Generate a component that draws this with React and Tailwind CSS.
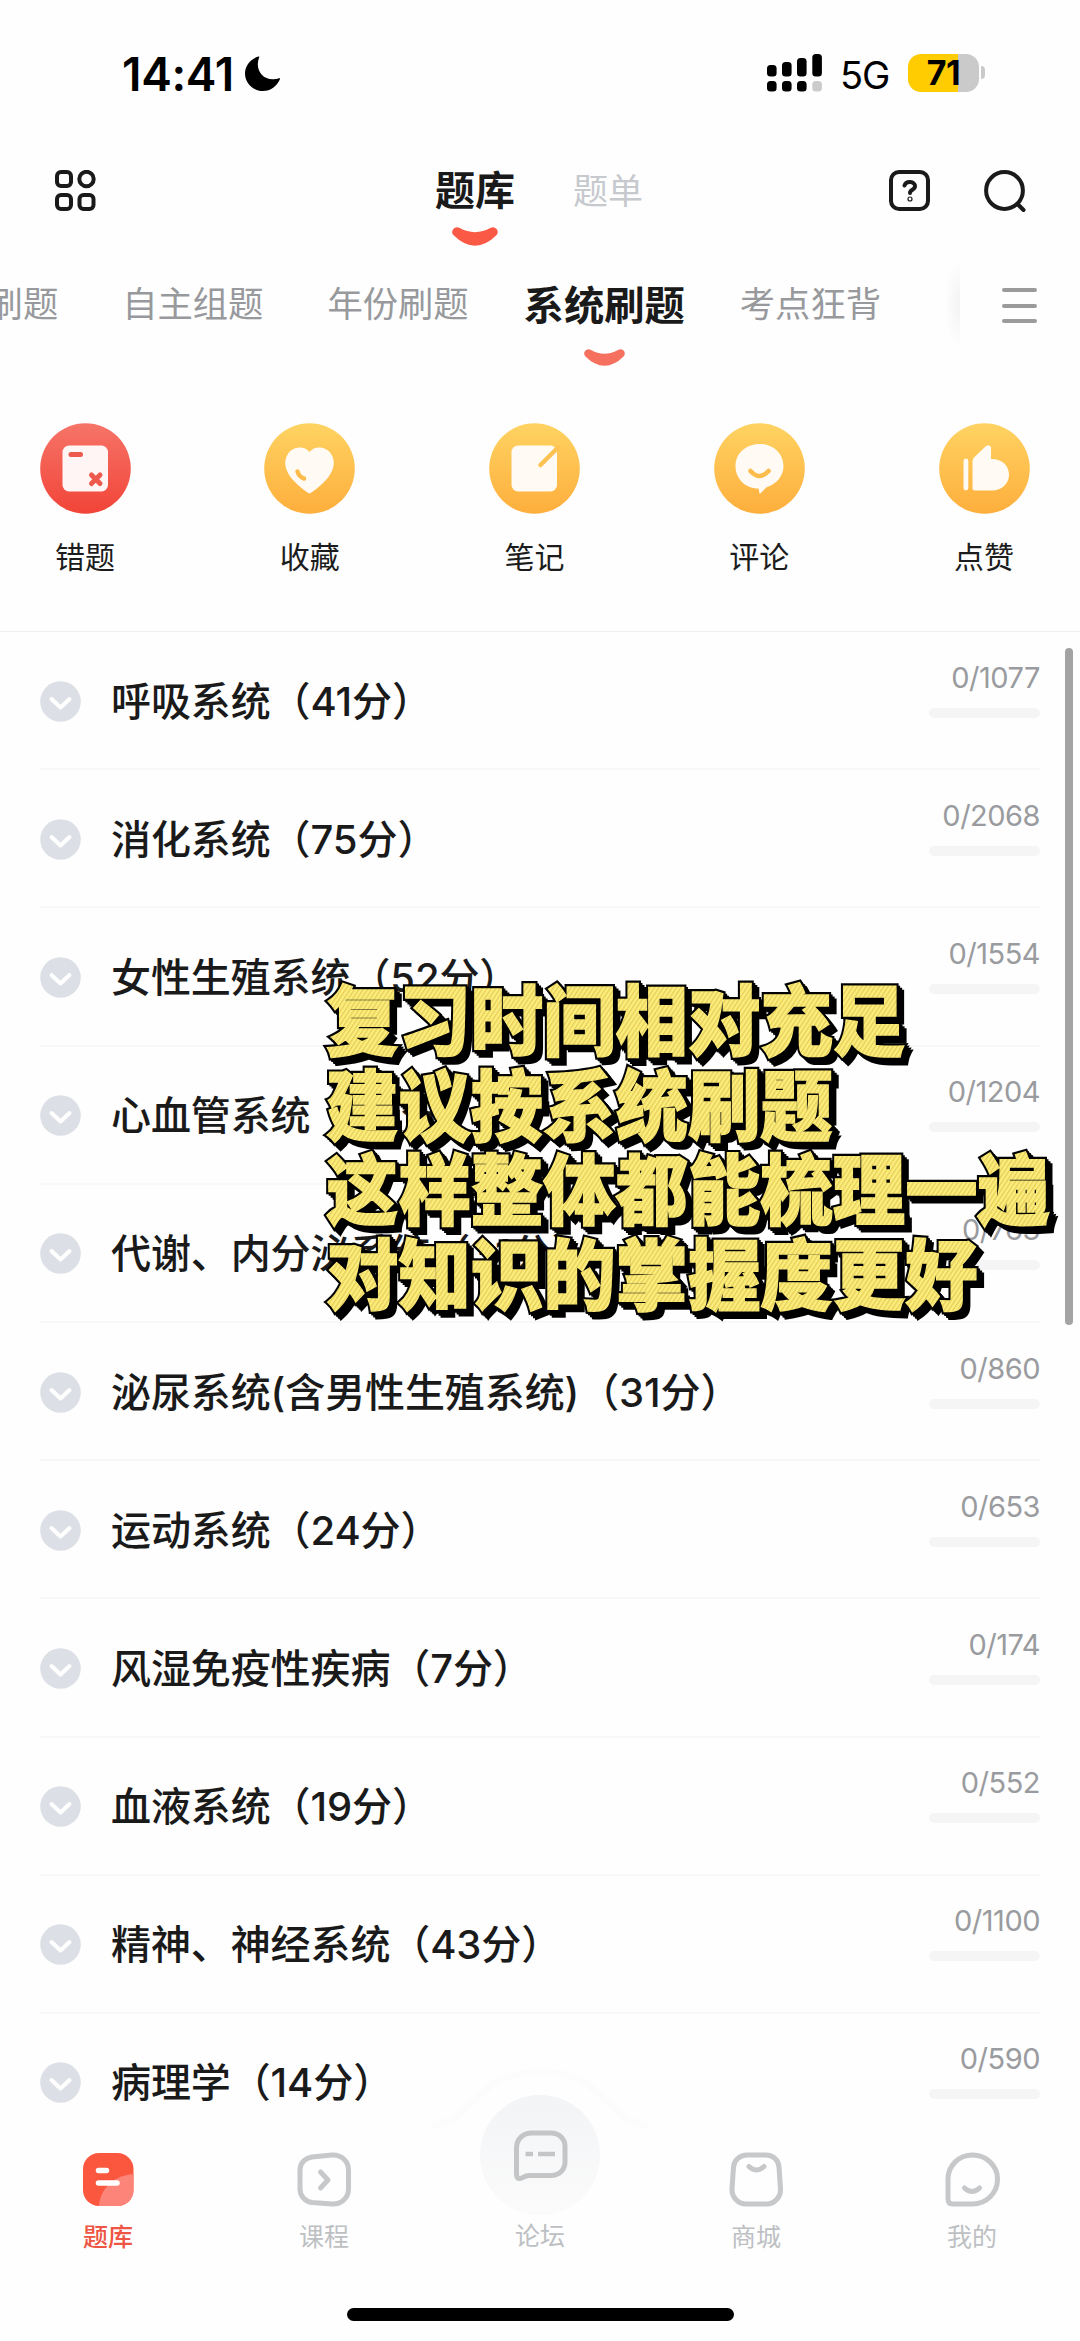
import React from 'react';

const tabs = [
  { label: '智能刷题', className: '-ml-[83px]' },
  { label: '自主组题', className: 'ml-[64px]' },
  { label: '年份刷题', className: 'ml-[64px]' },
  { label: '系统刷题', className: 'ml-[55px]', active: true },
  { label: '考点狂背', className: 'ml-[55px]' },
];

const chapters = [
  { name: '呼吸系统（41分）', total: 1077 },
  { name: '消化系统（75分）', total: 2068 },
  { name: '女性生殖系统（52分）', total: 1554 },
  { name: '心血管系统（63分）', total: 1204 },
  { name: '代谢、内分泌系统（31分）', total: 763 },
  { name: '泌尿系统(含男性生殖系统)（31分）', total: 860 },
  { name: '运动系统（24分）', total: 653 },
  { name: '风湿免疫性疾病（7分）', total: 174 },
  { name: '血液系统（19分）', total: 552 },
  { name: '精神、神经系统（43分）', total: 1100 },
  { name: '病理学（14分）', total: 590 },
];

const tips = ['复习时间相对充足', '建议按系统刷题', '这样整体都能梳理一遍', '对知识的掌握度更好'];

function Smile({ className }) {
  return (
    <svg className={className} viewBox="0 0 46 19" fill="none">
      <path d="M5 5Q23 23 41 5Q23 15 5 5Z" fill="currentColor" stroke="currentColor" strokeWidth="9.500" strokeLinejoin="round" />
    </svg>
  );
}

function StatusBar() {
  const bars = [
    { x: 0, y: 11 },
    { x: 15, y: 8 },
    { x: 30, y: 4 },
    { x: 45.3, y: 0 },
  ];
  return (
    <div className="flex h-[144px] shrink-0 items-center pl-[122px] pr-[95px]">
      <span className="mt-[3px] text-[46px] leading-none font-semibold tracking-[-0.300px] text-black">14:41</span>
      <svg className="ml-[11px] mt-[2px] h-[35px] w-[35px]" viewBox="0 0 35 35">
        <path d="M13.500 0.600C14.500 0.200 14.400 0.900 14 1.800C10 13 16.500 24 29 23.300C31 23.200 32.500 22.800 34 22.300C35 22 35.200 22.500 34.900 23.300C32 30.500 25.500 35 18 35C8 35 0 27 0 17.500C0 9.800 5.500 3 13.500 0.600Z" fill="#000" />
      </svg>
      <svg className="ml-auto mt-[1px] h-[38px] w-[56px]" viewBox="0 0 56 38">
        {bars.map((b, i) => (
          <g key={i}>
            <rect x={b.x} y={b.y} width="9.600" height={22.5 - b.y} rx="3.500" fill="#000" />
            <rect x={b.x} y="27" width="9.600" height="10.600" rx="3.500" fill={i === 3 ? '#cbcbcb' : '#000'} />
          </g>
        ))}
      </svg>
      <span className="ml-[17px] mt-[5px] w-[50px] text-[38px] leading-none tracking-[-1px]">5G</span>
      <div className="ml-[18px] mt-[1px] flex items-center">
        <div className="flex h-[38px] w-[71px] items-center justify-center rounded-[13px] bg-linear-to-r from-[#fecc00] from-71% to-[#cacaca] to-71% text-[34px] leading-none font-bold tracking-[-0.500px] text-black">71</div>
        <div className="ml-[2px] h-[13px] w-[4px] rounded-r-full bg-[#cacaca]" />
      </div>
    </div>
  );
}

function Header() {
  return (
    <div className="flex h-[114px] shrink-0 items-start pl-[55px] pr-[54px]">
      <svg className="mt-[26px] h-[41px] w-[41px]" viewBox="0 0 41 41" fill="none" stroke="#1a1a1a" strokeWidth="4">
        <rect x="2" y="2" width="14" height="14" rx="4" />
        <circle cx="31.500" cy="9" r="7.200" />
        <rect x="2" y="25" width="14" height="14" rx="4" />
        <rect x="24.500" y="25" width="14" height="14" rx="4" />
      </svg>
      <div className="ml-[339px] mt-[27px] flex flex-col items-center">
        <span className="text-[40px] leading-[40px] font-bold text-[#1a1a1a]">题库</span>
        <Smile className="mt-[16px] h-[19px] w-[46px] text-[#fa5a45]" />
      </div>
      <span className="ml-[58px] mt-[30px] text-[35px] leading-[35px] text-[#c6c9cd]">题单</span>
      <div className="ml-auto mt-[26px] flex h-[41px] w-[41px] items-center justify-center rounded-[10px] border-4 border-[#1a1a1a]">
        <svg className="h-[22px] w-[16px]" viewBox="0 0 16 22" fill="none" stroke="#1a1a1a" strokeWidth="4" strokeLinecap="round">
          <path d="M2.500 5.500C4 0.500 13 1 13 6.300C13 10 8 9.500 8 13" />
          <circle cx="8" cy="19" r="0.600" />
        </svg>
      </div>
      <svg className="ml-[54px] mt-[26px] h-[42px] w-[42px]" viewBox="0 0 42 42" fill="none" stroke="#1a1a1a" strokeWidth="4" strokeLinecap="round">
        <circle cx="20.500" cy="20.500" r="18.400" />
        <path d="M33.500 34L39.500 40" />
      </svg>
    </div>
  );
}

function TabBar() {
  return (
    <div className="flex h-[126px] shrink-0 items-start overflow-hidden">
      <div className="flex h-full w-[944px] items-start whitespace-nowrap">
        {tabs.map((t) =>
          t.active ? (
            <div key={t.label} className={`${t.className} mt-[28px] flex shrink-0 flex-col items-center`}>
              <span className="text-[40.300px] leading-[40px] font-bold text-[#1a1a1a]">{t.label}</span>
              <Smile className="mt-[23px] h-[17px] w-[41px] text-[#f6705f]" />
            </div>
          ) : (
            <span key={t.label} className={`${t.className} mt-[29px] shrink-0 text-[35.300px] leading-[36px] text-[#97999c]`}>{t.label}</span>
          )
        )}
      </div>
      <div className="h-[92px] w-[16px] bg-radial-[at_100%_50%] from-[#f3f3f3] to-[#fefefe] to-70%" />
      <div className="ml-[42px] mt-[30px] flex w-[35px] flex-col gap-[11.500px]">
        <span className="h-[4px] rounded-full bg-[#9b9b9b]" />
        <span className="h-[4px] rounded-full bg-[#9b9b9b]" />
        <span className="h-[4px] rounded-full bg-[#9b9b9b]" />
      </div>
    </div>
  );
}

const shortcuts = [
  {
    label: '错题',
    icon: (
      <>
        <rect x="22.500" y="22.500" width="45.500" height="46" rx="6.500" fill="#fff5f4" />
        <path d="M31 31.500H40.500" stroke="#ee594d" strokeWidth="5" />
        <path d="M51.500 52L60 60.500M60 52L51.500 60.500" stroke="#ee594d" strokeWidth="5" />
      </>
    ),
  },
  {
    label: '收藏',
    icon: (
      <>
        <path d="M45.500 29C51 22 62 24 66.500 30C73 39 69 49 62 57C57 62.500 49 69 45.500 70.500C42 69 34 62.500 29 57C22 49 18 39 24.500 30C29 24 40 22 45.500 29Z" fill="#fffaf3" />
        <path d="M33.500 48.500Q35 54 40 55.500" stroke="#fdbc4b" strokeWidth="4.500" />
      </>
    ),
  },
  {
    label: '笔记',
    icon: (
      <>
        <rect x="22.500" y="22.500" width="45.500" height="46" rx="6.500" fill="#fffaf3" />
        <path d="M51.500 42L69 24.500" stroke="#fdc253" strokeWidth="4.500" />
      </>
    ),
  },
  {
    label: '评论',
    icon: (
      <>
        <path d="M45.500 21C59 21 69.500 30.500 69.500 43C69.500 53 62.500 61 53 64C50 66 48.500 69 46.200 70.500C44.800 71 45.500 68 44.500 65.500C31 65.500 21.500 55.500 21.500 43C21.500 30.500 32 21 45.500 21Z" fill="#fffaf3" />
        <path d="M36.500 48Q45.500 58 54.500 48" stroke="#fdbd4c" strokeWidth="4.500" />
      </>
    ),
  },
  {
    label: '点赞',
    icon: (
      <>
        <rect x="24.500" y="35.500" width="4.800" height="32" rx="2.400" fill="#fffaf3" />
        <path d="M33.500 38Q33.500 36 35 34.500L47 23Q50 21 52 24V36C62 35.500 70 42 70 51.500C70 61 62.500 67.500 53 67.500H36Q33.500 67.500 33.500 65Z" fill="#fffaf3" />
      </>
    ),
  },
];

function Shortcuts() {
  return (
    <div className="flex h-[248px] shrink-0 justify-between border-b border-[#f1f1f1] pl-[39.500px] pr-[50.500px] pt-[39px]">
      {shortcuts.map((s, i) => (
        <div key={s.label} className="flex w-[91px] flex-col items-center">
          <svg className="h-[91px] w-[91px]" viewBox="0 0 91 91" fill="none" strokeLinecap="round">
            <defs>
              <linearGradient id={`shortcut-${i}`} x1="0" y1="0" x2="0" y2="1">
                <stop offset="0" stopColor={i === 0 ? '#f67468' : '#fed362'} />
                <stop offset="1" stopColor={i === 0 ? '#f24438' : '#feae3c'} />
              </linearGradient>
            </defs>
            <circle cx="45.500" cy="45.500" r="45.300" fill={`url(#shortcut-${i})`} />
            {s.icon}
          </svg>
          <span className="mt-[27px] text-[30px] leading-[32px] text-[#1c1c1c]">{s.label}</span>
        </div>
      ))}
    </div>
  );
}

function ChapterRow({ name, total }) {
  return (
    <div className="flex h-[138.200px] shrink-0 items-center border-b-2 border-[#f8f8f8]">
      <svg className="mt-[2px] h-[41px] w-[41px] shrink-0" viewBox="0 0 41 41" fill="none">
        <circle cx="20.500" cy="20.500" r="20.300" fill="#dcdfe5" />
        <path d="M11.500 18L20.500 26.500L29.500 18" stroke="#fff" strokeWidth="4" strokeLinecap="round" strokeLinejoin="round" />
      </svg>
      <span className="ml-[30px] mt-[3px] text-[40px] leading-[56px] font-medium tracking-[-0.100px] whitespace-nowrap text-[#1a1a1a]">{name}</span>
      <div className="mb-[23px] ml-auto flex flex-col items-end">
        <span className="text-[29px] leading-[36px] tracking-[-0.500px] text-[#999b9e]">0/{total}</span>
        <div className="mt-[12px] h-[10px] w-[111px] rounded-full bg-[#f5f5f5]" />
      </div>
    </div>
  );
}

// Sticker caption: hatched yellow letters with a black outline and a short black extrusion
function TipSticker() {
  return (
    <svg className="absolute left-[316px] top-[973px] h-[370px] w-[764px]" viewBox="0 0 764 370">
      <defs>
        <pattern id="hatch" width="3.600" height="3.600" patternUnits="userSpaceOnUse" patternTransform="rotate(35)">
          <rect width="3.600" height="3.600" fill="#fbee7b" />
          <rect width="1.300" height="3.600" fill="#e8cd5c" />
        </pattern>
        <g id="tips" transform="scale(1 1.070)" fontSize="72.400" fontWeight="900" strokeLinejoin="miter">
          {tips.map((t, i) => (
            <text key={t} x="10" y={72 + i * 79}>{t}</text>
          ))}
        </g>
      </defs>
      <use href="#tips" x="6" y="6" fill="#000" stroke="#000" strokeWidth="4.500" />
      <use href="#tips" x="4" y="4" fill="#000" stroke="#000" strokeWidth="4.500" />
      <use href="#tips" x="2" y="2" fill="#000" stroke="#000" strokeWidth="4.500" />
      <use href="#tips" fill="#000" stroke="#000" strokeWidth="5.500" />
      <use href="#tips" fill="url(#hatch)" stroke="url(#hatch)" strokeWidth="1.400" />
    </svg>
  );
}

const navItems = [
  {
    label: '题库',
    active: true,
    icon: (
      <>
        <rect x="2" y="1" width="50.500" height="53" rx="16" fill="#fb573f" />
        <path d="M52.500 22V38C52.500 47 46 54 36.500 54H18C19 38 31 24 52.500 22Z" fill="#fd8478" />
        <path d="M17.500 18.500H25.500M17.500 31H36" stroke="#fff" strokeWidth="5.500" />
      </>
    ),
  },
  {
    label: '课程',
    icon: (
      <>
        <path d="M15 5L35 3C44 2.500 51.500 9 51.500 18V37C51.500 46 44 52.500 35 52L15 50.500C8 49.500 3 44 3 37V18C3 11 8 6 15 5Z" />
        <path d="M23.500 20L31 28L23.500 36" strokeWidth="5" />
      </>
    ),
  },
  { label: '论坛' },
  {
    label: '商城',
    icon: (
      <>
        <path d="M18 3H37C44 3 49.500 8 50 15L51.500 37C52 45 45.500 52 37.500 52H17C9 52 2.500 45 3 37L4.500 15C5 8 11 3 18 3Z" />
        <path d="M20 14.500Q27.500 21.500 35 14.500" strokeWidth="5" />
      </>
    ),
  },
  {
    label: '我的',
    icon: (
      <>
        <path d="M27.500 3C41.500 3 52.500 14 52.500 27C52.500 41 41.500 52 27.500 52H7.500Q3 52 3 47V27C3 14 13.500 3 27.500 3Z" />
        <path d="M19.500 36Q27 43 34.500 36" strokeWidth="5" />
      </>
    ),
  },
];

function BottomNav() {
  return (
    <div className="relative flex h-[226px] shrink-0 flex-col bg-[#fefefe]">
      <svg className="absolute -top-[48px] left-[430px] h-[64px] w-[220px]" viewBox="0 0 220 64" fill="none" stroke="#fcfcfc" strokeWidth="7">
        <path d="M2 58C45 56 42 5 110 5C178 5 175 56 218 58" />
      </svg>
      <div className="flex h-[193px]">
        {navItems.map((n) => (
          <div key={n.label} className="flex flex-1 flex-col items-center">
            {n.icon ? (
              <svg className="mt-[37px] h-[55px] w-[55px]" viewBox="0 0 55 55" fill="none" stroke={n.active ? 'none' : '#c6c8ca'} strokeWidth="5" strokeLinecap="round" strokeLinejoin="round">
                {n.icon}
              </svg>
            ) : (
              <div className="relative -mt-[20px] flex h-[120px] w-[120px] shrink-0 justify-center rounded-full bg-linear-to-b from-[#f3f4f6] to-[#fbfbfb] pt-[35px]">
                <svg className="h-[52px] w-[55px]" viewBox="0 0 55 52" fill="none" stroke="#c3c5c7" strokeWidth="5" strokeLinecap="round" strokeLinejoin="round">
                  <path d="M19 3H38C46 3 52 9 52 16V32C52 40 46 45.500 38 45.500H16C11 45.500 9 49 6 48.500Q3.500 48 3.500 44V18C3.500 9 10 3 19 3Z" />
                  <path d="M12.500 24H20M25 24H42" strokeWidth="4.500" strokeLinecap="butt" />
                </svg>
              </div>
            )}
            <span className={`${n.icon ? 'mt-[16px]' : 'mt-[7px]'} text-[25px] leading-[28px] ${n.active ? 'font-medium text-[#ee5544]' : 'text-[#bdc0c3]'}`}>{n.label}</span>
          </div>
        ))}
      </div>
      <div className="mx-auto h-[13px] w-[387px] rounded-full bg-black" />
    </div>
  );
}

export default function App() {
  return (
    <div className="relative flex h-[2341px] w-[1080px] flex-col overflow-hidden bg-[#fefefe] font-[Inter,'Noto_Sans_CJK_SC',sans-serif]">
      <StatusBar />
      <Header />
      <TabBar />
      <Shortcuts />
      <div className="flex flex-1 flex-col overflow-hidden px-[40px]">
        {chapters.map((c) => (
          <ChapterRow key={c.name} name={c.name} total={c.total} />
        ))}
      </div>
      <BottomNav />
      <div className="absolute left-[1065px] top-[648px] h-[677px] w-[8px] rounded-full bg-[#a3a3a3]" />
      <TipSticker />
    </div>
  );
}
